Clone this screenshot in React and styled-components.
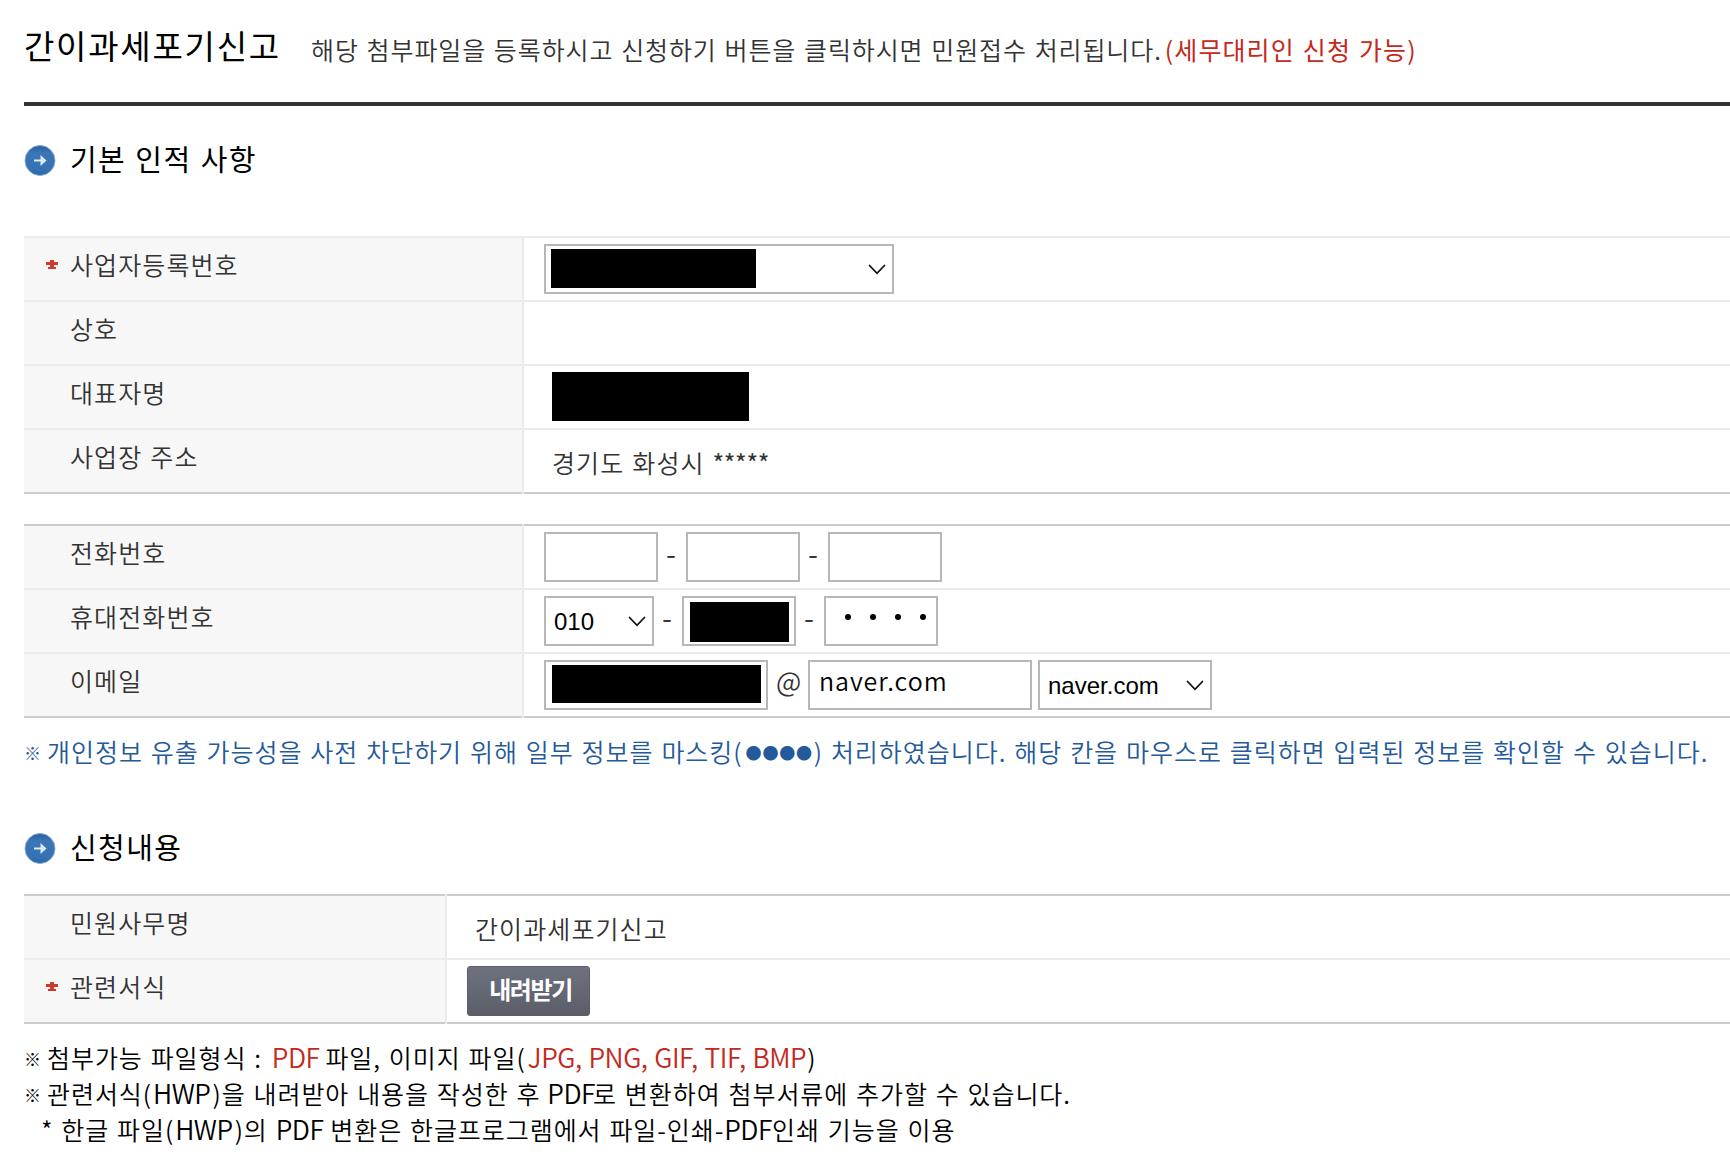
import React from "react";
import styled, { createGlobalStyle } from "styled-components";

const GlobalStyle = createGlobalStyle`
  * {
    box-sizing: border-box;
  }

  body {
    margin: 0;
    background: #fff;
    color: #333;
    font-family: "Noto Sans CJK KR", "Liberation Sans", sans-serif;
    font-size: 25px;
    font-weight: 350;
    letter-spacing: 0.95px;
    word-spacing: 1.3px;
    overflow: hidden;
  }
`;

const Page = styled.main`
  width: 1730px;
  height: 1170px;
  padding-left: 24px;
  overflow: hidden;
  white-space: nowrap;
`;

const PageHeader = styled.header`
  display: flex;
  height: 106px;
  padding-top: 21px;
  border-bottom: 4px solid #333;
`;

const PageTitle = styled.h1`
  width: 287px;
  margin: 0;
  color: #000;
  font-size: 33px;
  font-weight: 400;
  letter-spacing: 1.75px;
  line-height: 48px;
`;

const Guide = styled.p`
  margin: 4px 0 0;
  letter-spacing: 0.9px;
  line-height: 48px;
`;

const Red = styled.span`
  color: #c5281c;
`;

const GuideAccent = styled(Red)`
  margin-left: 3px;
  font-weight: 400;
  letter-spacing: 1.1px;
`;

const SectionTitle = styled.h2`
  display: flex;
  align-items: center;
  gap: 14px;
  height: 40px;
  margin: ${(props) => props.$margin};
  color: #000;
  font-size: 29px;
  font-weight: 400;
  letter-spacing: 1.4px;

  svg {
    margin-top: 4px;
  }
`;

const Table = styled.div`
  border-top: ${(props) => (props.$soft ? "2px solid #ebebeb" : "0")};
  margin-bottom: ${(props) => props.$gap || 0};
  letter-spacing: 1.1px;
`;

const Row = styled.div`
  display: grid;
  grid-template-columns: ${(props) => props.$label}px 2px 1fr;
  height: ${(props) => (props.$first ? 66 : 64)}px;
`;

const Cell = styled.div`
  display: flex;
  align-items: center;
  border-top: ${(props) => (props.$first ? "2px solid #ccc" : "0")};
  border-bottom: 2px solid ${(props) => (props.$last ? "#ccc" : "#ebebeb")};
`;

const LabelCell = styled(Cell)`
  padding: 0 0 10px 21px;
  background: #f7f7f7;
`;

const Divider = styled.div`
  background: #ebebeb;
`;

const ValueCell = styled(Cell)`
  padding-left: 20px;
`;

const Mark = styled.span`
  display: flex;
  width: 25px;
  padding-top: 1px;
`;

const PlainText = styled.span`
  padding: 1px 0 0 8px;
`;

const Field = styled.div`
  display: flex;
  align-items: center;
  flex: none;
  width: ${(props) => props.$width}px;
  height: 50px;
  padding: ${(props) => props.$padding || "0 8px 0 9px"};
  border: 2px solid #b8b8b8;
  background: #fff;
  color: #000;

  svg {
    margin-left: auto;
    flex: none;
  }
`;

const TextInput = styled.input`
  width: 100%;
  height: 30px;
  padding: 0;
  border: 0;
  outline: 0;
  background: none;
  color: #000;
  font: inherit;
  letter-spacing: ${(props) => props.$spacing || "inherit"};
`;

const SelectText = styled.span`
  padding-top: 1px;
  font-family: "Liberation Sans", sans-serif;
  font-size: 24px;
  font-weight: 400;
  letter-spacing: 0;
`;

const Dots = styled.span`
  display: flex;
  gap: 19px;

  i {
    width: 6px;
    height: 6px;
    border-radius: 50%;
    background: #000;
  }
`;

const Separator = styled.span`
  width: ${(props) => props.$width || 28}px;
  padding: ${(props) => props.$padding || "0 2px 9px 0"};
  flex: none;
  font-size: ${(props) => props.$size || 29}px;
  letter-spacing: 0;
  line-height: 1;
  text-align: center;
`;

const Redacted = styled.span`
  flex: none;
  width: ${(props) => props.$width}px;
  height: ${(props) => props.$height}px;
  margin: ${(props) => props.$margin || 0};
  background: #000;
`;

const DownloadButton = styled.button`
  width: 123px;
  height: 50px;
  padding: 0 0 5px 4px;
  border: 1px solid #5a5f6b;
  border-radius: 3px;
  background: linear-gradient(#6d727e, #595e69);
  color: #fff;
  font: inherit;
  font-size: 24px;
  font-weight: 700;
  letter-spacing: -1.4px;
`;

const Notice = styled.p`
  margin: 0;
  height: 100px;
  padding-top: 15px;
  color: #24599a;
  line-height: 36px;
  letter-spacing: 0.98px;
`;

const RefMark = styled.span`
  display: inline-block;
  width: 23px;
  font-size: 17px;
  letter-spacing: 0;
  line-height: 1;
  vertical-align: 2px;
`;

const MaskDots = styled.span`
  margin: 0 1px 0 3px;
  font-size: 16px;
  letter-spacing: 0.8px;
  line-height: 1;
  vertical-align: 3px;
`;

const Notes = styled.div`
  padding-top: 15px;
  color: #000;
  line-height: 36px;

  p {
    height: 36px;
    margin: 0;
  }
`;

const SubNote = styled.p`
  && {
    padding-left: 17px;
  }
`;

const Latin = styled.span`
  margin: ${(props) => props.$margin || 0};
  font-size: 26.5px;
  letter-spacing: -0.45px;
  line-height: 1;
`;

const Stars = styled.span`
  font-weight: 400;
  letter-spacing: -0.4px;
`;

const ArrowBullet = () => (
  <svg width="32" height="31" viewBox="0 0 32 31">
    <defs>
      <linearGradient id="bullet" x1="0" y1="0" x2="0" y2="1">
        <stop offset="0" stopColor="#2a5c97" />
        <stop offset="0.25" stopColor="#3977b8" />
        <stop offset="0.8" stopColor="#3472b4" />
        <stop offset="1" stopColor="#2b659f" />
      </linearGradient>
    </defs>
    <circle cx="16" cy="15.5" r="15" fill="url(#bullet)" stroke="#7faad2" />
    <path d="M10 14.5h6.5v-4.5l6 5.5-6 5.5v-4.5h-6.5z" fill="#dbe9f7" />
  </svg>
);

const RequiredMark = () => (
  <svg width="14" height="10" viewBox="0 0 14 10">
    <path d="M5 0h4v2h4v3H9v2h2v2H3V7h2V5H1V2h4z" fill="#cb3a2c" />
  </svg>
);

const Chevron = () => (
  <svg width="18" height="11" viewBox="0 0 18 11">
    <path d="M1 1l8 8.3L17 1" fill="none" stroke="#111" strokeWidth="1.8" />
  </svg>
);

const FormRow = ({ label, required, labelWidth = 498, first, last, children }) => (
  <Row $label={labelWidth} $first={first}>
    <LabelCell $first={first} $last={last}>
      <Mark>{required && <RequiredMark />}</Mark>
      {label}
    </LabelCell>
    <Divider />
    <ValueCell $first={first} $last={last}>
      {children}
    </ValueCell>
  </Row>
);

export default function App() {
  return (
    <>
      <GlobalStyle />
      <Page>
        <PageHeader>
          <PageTitle>간이과세포기신고</PageTitle>
          <Guide>
            해당 첨부파일을 등록하시고 신청하기 버튼을 클릭하시면 민원접수 처리됩니다.
            <GuideAccent>(세무대리인 신청 가능)</GuideAccent>
          </Guide>
        </PageHeader>

        <SectionTitle $margin="32px 0 58px">
          <ArrowBullet />
          기본 인적 사항
        </SectionTitle>

        <Table $soft $gap="30px">
          <FormRow label="사업자등록번호" required>
            <Field $width={350} $padding="0 6px 0 5px">
              <Redacted $width={205} $height={39} $margin="0 0 1px" />
              <Chevron />
            </Field>
          </FormRow>
          <FormRow label="상호" />
          <FormRow label="대표자명">
            <Redacted $width={197} $height={49} $margin="0 0 1px 8px" />
          </FormRow>
          <FormRow label="사업장 주소" last>
            <PlainText>
              경기도 화성시 <Stars>*****</Stars>
            </PlainText>
          </FormRow>
        </Table>

        <Table>
          <FormRow label="전화번호" first>
            <Field $width={114}>
              <TextInput />
            </Field>
            <Separator>-</Separator>
            <Field $width={114}>
              <TextInput />
            </Field>
            <Separator>-</Separator>
            <Field $width={114}>
              <TextInput />
            </Field>
          </FormRow>
          <FormRow label="휴대전화번호">
            <Field $width={110} $padding="0 6px 0 8px">
              <SelectText>010</SelectText>
              <Chevron />
            </Field>
            <Separator>-</Separator>
            <Field $width={114} $padding="0 0 2px 6px">
              <Redacted $width={99} $height={40} $margin="4px 0 0" />
            </Field>
            <Separator>-</Separator>
            <Field $width={114} $padding="0 0 8px 19px">
              <Dots>
                <i />
                <i />
                <i />
                <i />
              </Dots>
            </Field>
          </FormRow>
          <FormRow label="이메일" last>
            <Field $width={224} $padding="0 0 2px 6px">
              <Redacted $width={209} $height={38} />
            </Field>
            <Separator $width={40} $size={27} $padding="0 0 10px 1px">
              @
            </Separator>
            <Field $width={224} $padding="0 8px 11px 9px">
              <TextInput defaultValue="naver.com" $spacing="0.95px" />
            </Field>
            <Separator $width={6} />
            <Field $width={174} $padding="0 6px 0 8px">
              <SelectText>naver.com</SelectText>
              <Chevron />
            </Field>
          </FormRow>
        </Table>

        <Notice>
          <RefMark>※</RefMark>
          개인정보 유출 가능성을 사전 차단하기 위해 일부 정보를 마스킹(<MaskDots>●●●●</MaskDots>) 처리하였습니다. 해당
          칸을 마우스로 클릭하면 입력된 정보를 확인할 수 있습니다.
        </Notice>

        <SectionTitle $margin="8px 0 28px">
          <ArrowBullet />
          신청내용
        </SectionTitle>

        <Table>
          <FormRow label="민원사무명" labelWidth={421} first>
            <PlainText>간이과세포기신고</PlainText>
          </FormRow>
          <FormRow label="관련서식" labelWidth={421} required last>
            <DownloadButton>내려받기</DownloadButton>
          </FormRow>
        </Table>

        <Notes>
          <p>
            <RefMark>※</RefMark>
            첨부가능 파일형식 :{" "}
            <Red>
              <Latin $margin="0 -2px 0 2px">PDF</Latin>
            </Red>{" "}
            파일, 이미지 파일(
            <Red>
              <Latin $margin="0 1px 0 2px">JPG, PNG, GIF, TIF, BMP</Latin>
            </Red>
            )
          </p>
          <p>
            <RefMark>※</RefMark>
            관련서식(<Latin $margin="0 2px 0 1px">HWP</Latin>)을 내려받아 내용을 작성한 후{" "}
            <Latin $margin="0 -2px 0 -1px">PDF</Latin>로 변환하여 첨부서류에 추가할 수 있습니다.
          </p>
          <SubNote>
            * 한글 파일(<Latin $margin="0 2px 0 1px">HWP</Latin>)의 <Latin $margin="0 -1px 0 0">PDF</Latin> 변환은
            한글프로그램에서 파일-인쇄-
            <Latin>PDF</Latin>인쇄 기능을 이용
          </SubNote>
        </Notes>
      </Page>
    </>
  );
}
